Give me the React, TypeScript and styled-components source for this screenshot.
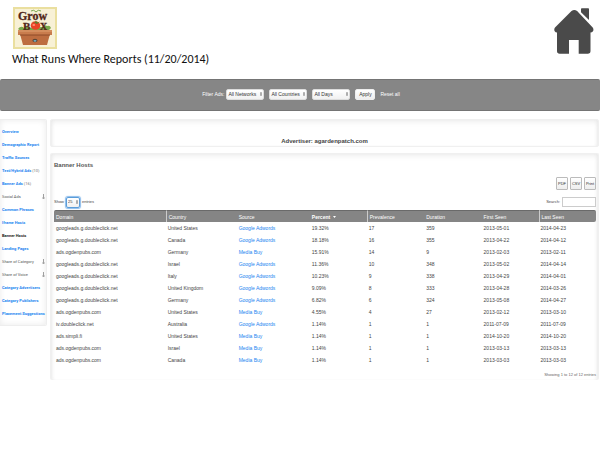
import React from 'react';
import styled, { createGlobalStyle } from 'styled-components';

const Global = createGlobalStyle`
  * { box-sizing: border-box; }
  body {
    margin: 0;
    background: #fff;
    color: #444;
    font: 5px/6px "Liberation Sans", Arial, sans-serif;
  }
  button, input, select { font: inherit; color: inherit; margin: 0; }
  a { color: #1b84f0; text-decoration: none; }
`;

const Header = styled.header`
  display: flex;
  justify-content: space-between;
  padding: 7px 6px 0 12px;
`;
const Title = styled.h1`
  margin: 2px 0 0;
  color: #111;
  font: 400 12px/16px Carlito, Lato, sans-serif;
`;
const Brand = styled.div`
  height: 72px;
  svg { display: block; margin-left: 1px; }
`;
const HomeLink = styled.a`
  svg { display: block; }
`;

const FilterBar = styled.form`
  display: flex;
  align-items: center;
  justify-content: center;
  gap: 5px;
  height: 32px;
  padding: 0 0 2px 2px;
  background: #868686;
  border: solid #747474;
  border-width: 1px 0;
  border-radius: 2px;
  color: #fff;
`;
const Label = styled.label`
  display: flex;
  align-items: center;
  gap: 2px;
`;
const Picker = styled.span<{ $width: number; $focused?: boolean }>`
  display: flex;
  align-items: center;
  width: ${p => p.$width}px;
  height: 11px;
  padding-right: 1px;
  background: linear-gradient(#fff, #f1f1f1);
  border: 1px solid ${p => (p.$focused ? '#5b9dd9' : '#ddd')};
  border-radius: 2px;
  box-shadow: ${p => (p.$focused ? '0 0 1px 1px #8cbcec' : 'none')};
  color: #333;
  select {
    flex: 1;
    min-width: 0;
    padding: 0 0 0 1px;
    border: 0;
    outline: 0;
    background: transparent;
    appearance: none;
  }
`;
const Button = styled.button<{ $width: number; $tall?: boolean }>`
  width: ${p => p.$width}px;
  height: ${p => (p.$tall ? 13 : 11)}px;
  padding: 0;
  background: linear-gradient(#fff, #eee);
  border: 1px solid ${p => (p.$tall ? '#bbb' : '#eee')};
  border-radius: ${p => (p.$tall ? 1 : 2)}px;
  color: #333;
`;
const Reset = styled.a`
  color: #fff;
`;

const Columns = styled.div`
  display: flex;
  align-items: flex-start;
  gap: 3px;
  padding: 8px 1px 0 0;
`;
const Sidebar = styled.nav`
  flex: 0 0 47px;
  min-width: 0;
  padding: 5px 1px 5px 2px;
  border: solid #eee;
  border-width: 1px 1px 1px 0;
  border-radius: 0 2px 2px 0;
  box-shadow: inset 0 0 6px #eaeaea;
  font-family: Roboto, "Liberation Sans", sans-serif;
  font-size: 4px;
`;
const Item = styled.a<{ $tone: 'link' | 'group' | 'current' }>`
  display: flex;
  align-items: center;
  justify-content: space-between;
  height: 13px;
  white-space: nowrap;
  color: ${p => ({ link: '#1b84f0', group: '#555', current: '#222' })[p.$tone]};
  font-weight: ${p => (p.$tone === 'group' ? 400 : 700)};
  span { color: #777; font-weight: 400; }
`;

const Content = styled.main`
  flex: 1;
  min-width: 0;
`;
const Panel = styled.section`
  padding: 7px 2px 2px 3px;
  border: solid #f0f0f0;
  border-width: 1px 1px 0;
  border-radius: 2px;
  box-shadow: inset 0 3px 6px -2px #e8e8e8, inset 3px 0 4px -3px #e2e2e2, inset -3px 0 4px -3px #e2e2e2;
`;
const Advertiser = styled(Panel)`
  height: 28px;
  margin-bottom: 6px;
  padding: 15px 0 0;
  border-bottom-width: 1px;
  text-align: center;
  h2 { margin: 0; font-size: 6px; line-height: 12px; }
`;
const Heading = styled.h3`
  margin: 0;
  font-size: 6px;
  font-weight: 700;
  line-height: 8px;
  color: #555;
`;
const Actions = styled.div`
  display: flex;
  justify-content: flex-end;
  gap: 2px;
  padding-top: 8px;
  font-size: 4px;
`;
const Controls = styled.div`
  display: flex;
  align-items: center;
  justify-content: space-between;
  height: 12px;
  margin: 6px 0 2px;
  font-size: 4px;
`;
const Search = styled.input`
  width: 34px;
  height: 10px;
  padding: 0 1px;
  background: #fff;
  border: 1px solid #ccc;
`;

const Table = styled.table`
  width: 100%;
  table-layout: fixed;
  border-collapse: separate;
  border-spacing: 0;
  td, th {
    height: 12px;
    padding: 0 0 0 2px;
    text-align: left;
    white-space: nowrap;
    font-weight: 400;
  }
  th { background: #858585; color: #fff; border-top: 1px solid #6a6a6a; }
  th:first-child { border-radius: 2px 0 0 0; }
  th:last-child { border-radius: 0 2px 2px 0; }
`;
const Head = styled.th<{ $divided?: boolean; $sorted?: boolean }>`
  border-left: ${p => (p.$divided ? '1px solid #ccc' : '0')};
  && { font-weight: ${p => (p.$sorted ? 700 : 400)}; }
  svg { margin-left: 1px; vertical-align: middle; }
`;
const Footer = styled.p`
  margin: 6px 0 0;
  text-align: right;
  font-size: 4px;
  color: #666;
`;

const Logo = () => (
  <svg width="44" height="42" viewBox="0 0 44 42" role="img" aria-label="The Grow Box">
    <rect width="44" height="42" fill="#eadf9f" />
    <rect x="2" y="2" width="40" height="38" fill="#f8f1d6" />
    <path d="M5 22q3-4 6-1 2-3 5 0l13-1q2-3 5-1 3-1 4 2l-3 3H8z" fill="#78a84b" />
    <path d="M18 4q3-2 5 1 2-3 5-1" stroke="#7ba850" strokeWidth="1" fill="none" />
    <g fontFamily="Liberation Serif, serif" fontWeight="700" fill="#512719" stroke="#512719" strokeWidth=".3">
      <text x="5" y="13" fontSize="12">Grow</text>
      <text x="10" y="23" fontSize="11">B</text>
      <text x="27" y="23" fontSize="10">X</text>
    </g>
    <ellipse cx="22.500" cy="18.500" rx="4.800" ry="4.300" fill="#e84325" />
    <path d="M19 14.500l3 1 1-2 1 2 3-1-3 2.500z" fill="#4f832d" />
    <ellipse cx="20.800" cy="18" rx="1.400" ry="1" fill="#ff9270" />
    <path d="M7 27h30l-3 11H10z" fill="#bd6d40" />
    <path d="M5 23h34v5H5z" fill="#c97c4d" />
    <path d="M5 24h34" stroke="#dfa071" />
    <path d="M7 28h30" stroke="#8e4a29" />
    <ellipse cx="22" cy="33.500" rx="2.600" ry="1.800" fill="#5b4638" />
    <ellipse cx="22" cy="33.800" rx="1.500" ry=".9" fill="#75b3c8" />
  </svg>
);
const House = () => (
  <svg width="40" height="47" viewBox="0 0 40 47" aria-hidden="true">
    <path d="M17.500 4q2.800-2.200 5.600 0L38.700 20.500q1.300 2 .3 3.800-1 1.300-2.500 1.300V44q0 2.700-2.700 2.700H24.700V33H15v13.700H5.700Q3 46.700 3 44V25.600q-1.500 0-2.300-1.300-1-1.800.3-3.800z" fill="#4a4a4a" />
    <path d="M27 2q0-.8.800-.8h6.400q.8 0 .8.800v11L27 5.300z" fill="#4a4a4a" />
  </svg>
);
const Arrows = () => (
  <svg width="2" height="6" viewBox="0 0 3 6" aria-hidden="true">
    <path d="M0 2.400 1.500 0 3 2.400zM0 3.600h3L1.500 6z" fill="#444" />
  </svg>
);
const DownArrow = () => (
  <svg width="3" height="6" viewBox="0 0 3 6" aria-hidden="true">
    <path d="M1.500 0v4M.3 3.500 1.500 5l1.200-1.500" fill="none" stroke="#777" strokeWidth=".7" />
  </svg>
);
const SortArrow = () => (
  <svg width="3" height="2" viewBox="0 0 3 2" aria-hidden="true">
    <path d="M0 0h3L1.500 2z" fill="#fff" />
  </svg>
);

type Nav = { name: string; count?: number; tone?: 'group' | 'current' };
const nav: Nav[] = [
  { name: 'Overview' },
  { name: 'Demographic Report' },
  { name: 'Traffic Sources' },
  { name: 'Text/Hybrid Ads', count: 10 },
  { name: 'Banner Ads', count: 16 },
  { name: 'Social Ads', tone: 'group' },
  { name: 'Common Phrases' },
  { name: 'Iframe Hosts' },
  { name: 'Banner Hosts', tone: 'current' },
  { name: 'Landing Pages' },
  { name: 'Share of Category', tone: 'group' },
  { name: 'Share of Voice', tone: 'group' },
  { name: 'Category Advertisers' },
  { name: 'Category Publishers' },
  { name: 'Placement Suggestions' },
];

const columns = [
  { name: 'Domain', width: '20.6%' },
  { name: 'Country', width: '13.1%', divided: true },
  { name: 'Source', width: '13.5%' },
  { name: 'Percent', width: '10.5%', sorted: true },
  { name: 'Prevalence', width: '10.6%', divided: true },
  { name: 'Duration', width: '10.6%' },
  { name: 'First Seen', width: '10.5%' },
  { name: 'Last Seen', width: '10.6%', divided: true },
];

const GOOGLE = 'googleads.g.doubleclick.net';
const OGDEN = 'ads.ogdenpubs.com';
const rows = [
  [GOOGLE, 'United States', 'Google Adwords', '19.32%', '17', '359', '2013-05-01', '2014-04-23'],
  [GOOGLE, 'Canada', 'Google Adwords', '18.18%', '16', '355', '2013-04-22', '2014-04-12'],
  [OGDEN, 'Germany', 'Media Buy', '15.91%', '14', '9', '2013-02-03', '2013-02-11'],
  [GOOGLE, 'Israel', 'Google Adwords', '11.36%', '10', '348', '2013-05-02', '2014-04-14'],
  [GOOGLE, 'Italy', 'Google Adwords', '10.23%', '9', '338', '2013-04-29', '2014-04-01'],
  [GOOGLE, 'United Kingdom', 'Google Adwords', '9.09%', '8', '333', '2013-04-28', '2014-03-26'],
  [GOOGLE, 'Germany', 'Google Adwords', '6.82%', '6', '324', '2013-05-08', '2014-04-27'],
  [OGDEN, 'United States', 'Media Buy', '4.55%', '4', '27', '2013-02-12', '2013-03-10'],
  ['iv.doubleclick.net', 'Australia', 'Google Adwords', '1.14%', '1', '1', '2011-07-09', '2011-07-09'],
  ['ads.simpli.fi', 'United States', 'Media Buy', '1.14%', '1', '1', '2014-10-20', '2014-10-20'],
  [OGDEN, 'Israel', 'Media Buy', '1.14%', '1', '1', '2013-03-13', '2013-03-13'],
  [OGDEN, 'Canada', 'Media Buy', '1.14%', '1', '1', '2013-03-03', '2013-03-03'],
];

const Filter = ({ value }: { value: string }) => (
  <Picker $width={38}>
    <select aria-label={value}><option>{value}</option></select>
    <Arrows />
  </Picker>
);

export default function App() {
  return (
    <>
      <Global />
      <Header>
        <Brand>
          <Logo />
          <Title>What Runs Where Reports (11/20/2014)</Title>
        </Brand>
        <HomeLink href="#" aria-label="Home"><House /></HomeLink>
      </Header>
      <FilterBar>
        <Label as="span">Filter Ads: <Filter value="All Networks" /></Label>
        <Filter value="All Countries" />
        <Filter value="All Days" />
        <Button type="button" $width={20}>Apply</Button>
        <Reset href="#">Reset all</Reset>
      </FilterBar>
      <Columns>
        <Sidebar>
          {nav.map(({ name, count, tone = 'link' }) => (
            <Item key={name} href="#" $tone={tone}>
              <div>{name}{count && <span> ({count})</span>}</div>
              {tone === 'group' && <DownArrow />}
            </Item>
          ))}
        </Sidebar>
        <Content>
          <Advertiser><h2>Advertiser: agardenpatch.com</h2></Advertiser>
          <Panel>
            <Heading>Banner Hosts</Heading>
            <Actions>
              <Button type="button" $tall $width={12}>PDF</Button>
              <Button type="button" $tall $width={12}>CSV</Button>
              <Button type="button" $tall $width={12}>Print</Button>
            </Actions>
            <Controls>
              <Label>
                Show
                <Picker $width={14} $focused>
                  <select><option>25</option></select>
                  <Arrows />
                </Picker>
                entries
              </Label>
              <Label>Search: <Search type="text" /></Label>
            </Controls>
            <Table>
              <colgroup>{columns.map(c => <col key={c.name} width={c.width} />)}</colgroup>
              <thead>
                <tr>
                  {columns.map(c => (
                    <Head key={c.name} $divided={c.divided} $sorted={c.sorted}>
                      {c.name} {c.sorted && <SortArrow />}
                    </Head>
                  ))}
                </tr>
              </thead>
              <tbody>
                {rows.map((row, i) => (
                  <tr key={i}>
                    {row.map((cell, j) => <td key={j}>{j === 2 ? <a href="#">{cell}</a> : cell}</td>)}
                  </tr>
                ))}
              </tbody>
            </Table>
            <Footer>Showing 1 to 12 of 12 entries</Footer>
          </Panel>
        </Content>
      </Columns>
    </>
  );
}
